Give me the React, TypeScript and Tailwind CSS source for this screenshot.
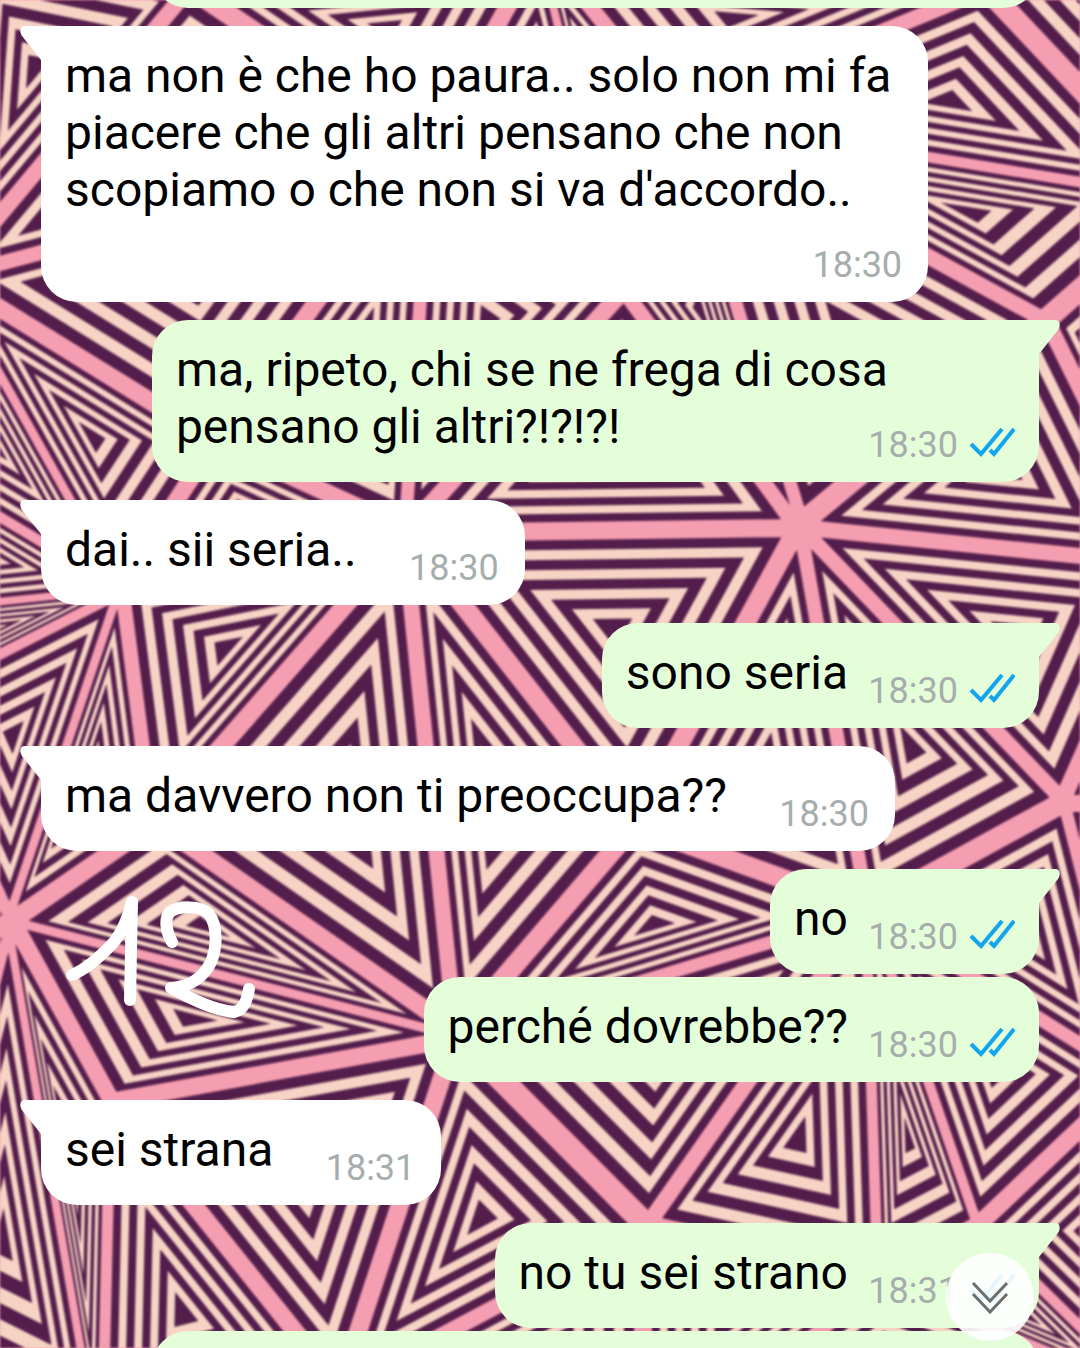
import clsx from "clsx";

type Point = [number, number];

type Message = {
  text: string;
  time: string;
  mine?: boolean;
  follow?: boolean;
};

const hubs: Record<string, Point> = {
  topLeft: [-30, -60],
  top: [190, -15],
  left: [-55, 278],
  fork: [430, 148],
  cross: [215, 445],
  mid: [405, 532],
  upper: [625, 287],
  roof: [540, -50],
  peak: [676, 116],
  topRight: [985, -12],
  sky: [1320, -160],
  far: [1185, 200],
  corner: [1049, 320],
  star: [800, 527],
  east: [1170, 565],
  port: [120, 590],
  portA: [-80, 470],
  portB: [-90, 612],
  portC: [-90, 697],
  west: [9, 920],
  westLow: [-100, 1000],
  southWest: [-100, 1350],
  knot: [150, 823],
  heart: [457, 1036],
  apex: [636, 827],
  ring: [868, 911],
  right: [1065, 803],
  rightLow: [1135, 1078],
  rightUp: [1230, 800],
  lowLeft: [108, 1100],
  foot: [100, 1450],
  vee: [340, 1390],
  low: [647, 1227],
  base: [880, 1279],
  lowRight: [977, 1228],
  exit: [1140, 1388],
  floor: [640, 1480],
};

const mesh = [
  "topLeft top left",
  "top left fork",
  "top fork roof",
  "fork roof upper",
  "roof upper peak",
  "roof peak topRight",
  "topRight sky far",
  "topRight far peak",
  "peak far corner",
  "peak corner star",
  "peak upper star",
  "left fork cross",
  "fork cross mid",
  "fork mid upper",
  "mid upper star",
  "left cross port",
  "cross port mid",
  "left port portA",
  "port portA portB",
  "port portB portC",
  "port portC west",
  "portC west westLow",
  "port knot west",
  "port mid knot",
  "knot mid heart",
  "mid star apex",
  "mid apex heart",
  "star apex ring",
  "star ring right",
  "star right east",
  "star east corner",
  "corner far east",
  "east right rightUp",
  "right rightUp rightLow",
  "apex ring heart",
  "ring right rightLow",
  "ring rightLow lowRight",
  "ring base lowRight",
  "ring base low",
  "heart ring low",
  "heart low vee",
  "heart vee lowLeft",
  "west knot heart",
  "west heart lowLeft",
  "west lowLeft foot",
  "lowLeft vee foot",
  "west foot southWest",
  "west westLow southWest",
  "low vee floor",
  "low floor base",
  "floor base exit",
  "base lowRight exit",
  "lowRight rightLow exit",
];

const rings = [0.9, 0.8, 0.7, 0.6, 0.5, 0.4, 0.3, 0.2, 0.1];

const messages: Message[] = [
  { text: "ma non è che ho paura.. solo non mi fa piacere che gli altri pensano che non scopiamo o che non si va d'accordo..", time: "18:30" },
  { text: "ma, ripeto, chi se ne frega di cosa pensano gli altri?!?!?!", time: "18:30", mine: true },
  { text: "dai.. sii seria..", time: "18:30" },
  { text: "sono seria", time: "18:30", mine: true },
  { text: "ma davvero non ti preoccupa??", time: "18:30" },
  { text: "no", time: "18:30", mine: true },
  { text: "perché dovrebbe??", time: "18:30", mine: true, follow: true },
  { text: "sei strana", time: "18:31" },
  { text: "no tu sei strano", time: "18:31", mine: true },
];

function Facet({ corners }: { corners: Point[] }) {
  const cx = (corners[0][0] + corners[1][0] + corners[2][0]) / 3;
  const cy = (corners[0][1] + corners[1][1] + corners[2][1]) / 3;
  return (
    <g>
      {rings.map((k, i) => (
        <polygon
          key={k}
          points={corners.map(([x, y]) => `${cx + (x - cx) * k},${cy + (y - cy) * k}`).join(" ")}
          fill={i % 2 === 0 ? "#541e4c" : "#f6d3c4"}
        />
      ))}
    </g>
  );
}

function Wallpaper() {
  return (
    <svg
      className="absolute inset-0 h-full w-full blur-[1px]"
      viewBox="0 0 1080 1348"
      preserveAspectRatio="xMidYMid slice"
      aria-hidden="true"
    >
      <rect width="1080" height="1348" fill="#f69eb1" />
      {mesh.map((names) => (
        <Facet key={names} corners={names.split(" ").map((n) => hubs[n])} />
      ))}
    </svg>
  );
}

function Doodle() {
  return (
    <svg
      className="absolute left-[60px] top-[890px] h-[140px] w-[210px]"
      viewBox="60 890 210 140"
      fill="none"
      stroke="#fff"
      strokeWidth="12"
      strokeLinecap="round"
      strokeLinejoin="round"
      role="img"
      aria-label="12"
    >
      <path d="M72 975C84 970 100 957 114 942C123 931 128 918 132 902L130 1000" />
      <path d="M172 942C166 932 164 918 170 912C178 906 200 905 209 914C218 926 217 948 211 962C204 976 191 987 171 988C188 997 212 1010 234 1012C244 1010 247 1000 249 989" />
    </svg>
  );
}

function Ticks() {
  return (
    <svg className="-mt-1" width="46" height="30" viewBox="0 0 46 30" fill="none" stroke="#12a5ee" strokeWidth="4" role="img" aria-label="Letto">
      <path d="M2 16l10 10L33 1" />
      <path d="M21 22l4 4L45 1" />
    </svg>
  );
}

function Tail({ mine }: { mine?: boolean }) {
  return (
    <svg
      className={clsx("absolute top-0 h-[35px] w-[22px]", mine ? "-right-[21px] -scale-x-100 text-[#e5feda]" : "-left-[21px] text-white")}
      viewBox="0 0 22 35"
      fill="currentColor"
      aria-hidden="true"
    >
      <path d="M22 0H5C0 0-1 5 2 10L21 34L22 35Z" />
    </svg>
  );
}

function Bubble({ text, time, mine, follow }: Message) {
  return (
    <li
      className={clsx(
        "relative max-w-8/9 rounded-[36px] px-6 pt-[21px] pb-[27px] text-[48px] leading-[57px] text-black",
        mine ? "self-end bg-[#e5feda]" : "self-start bg-white",
        follow ? "mt-[3px]" : "mt-[18px]",
        !follow && (mine ? "rounded-tr-none" : "rounded-tl-none")
      )}
    >
      {!follow && <Tail mine={mine} />}
      <p>
        {text}
        <span className={clsx("inline-block h-px", mine ? "w-[167px]" : "w-[144px]")} />
      </p>
      <div className={clsx("absolute bottom-4 flex items-center text-[36px] leading-[42px] text-[#a6adad]", mine ? "right-6 gap-[11px]" : "right-[26px]")}>
        <time>{time}</time>
        {mine && <Ticks />}
      </div>
    </li>
  );
}

export default function App() {
  return (
    <main className="relative h-screen overflow-hidden bg-[#f59db2] font-[Roboto,sans-serif]">
      <Wallpaper />
      <ol className="relative flex flex-col px-[41px]">
        <li className="-mt-[97px] h-[105px] w-8/9 self-end rounded-[36px] bg-[#e5feda]" />
        {messages.map((m, i) => (
          <Bubble key={i} {...m} />
        ))}
        <li className="mt-[3px] h-[105px] w-8/9 self-end rounded-[36px] bg-[#e5feda]" />
      </ol>
      <Doodle />
      <button
        type="button"
        aria-label="Vai in fondo"
        className="absolute right-[46px] bottom-[7px] flex size-[88px] items-center justify-center rounded-full bg-white/90"
      >
        <svg width="40" height="34" viewBox="0 0 40 34" fill="none" stroke="#6b6f6e" strokeWidth="3">
          <path d="M3 3l17 18L37 3" />
          <path d="M3 14l17 18L37 14" />
        </svg>
      </button>
    </main>
  );
}
